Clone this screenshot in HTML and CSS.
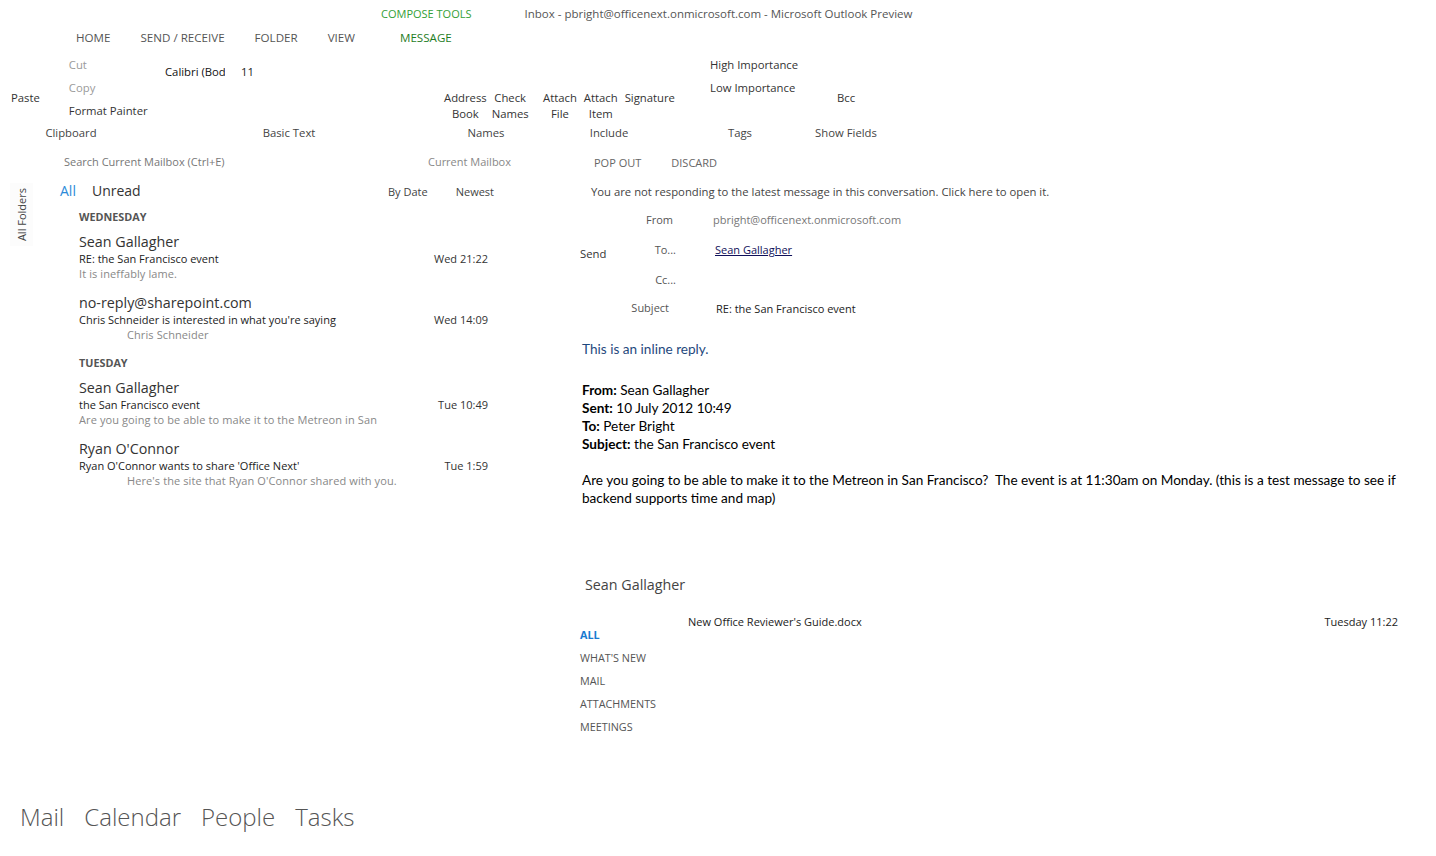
FILE: index.html
```html
<!DOCTYPE html>
<html lang="en">
<head>
    <meta charset="UTF-8">
    <meta name="viewport" content="width=device-width, initial-scale=1.0">
    <title>Inbox - pbright@officenext.onmicrosoft.com - Microsoft Outlook Preview</title>
    <link rel="stylesheet" href="styles.css">
</head>
<body>
<div class="app">
    <!-- Title bar -->
    <div class="titlebar">
        <span class="context-tab">COMPOSE TOOLS</span>
        <span class="window-title">Inbox - pbright@officenext.onmicrosoft.com - Microsoft Outlook Preview</span>
    </div>

    <!-- Ribbon tabs -->
    <div class="tabs">
        <span class="tab">HOME</span>
        <span class="tab">SEND / RECEIVE</span>
        <span class="tab">FOLDER</span>
        <span class="tab">VIEW</span>
        <span class="tab tab-message">MESSAGE</span>
    </div>

    <!-- Ribbon -->
    <div class="ribbon">
        <div class="group group-clipboard">
            <div class="group-body">
                <div class="big-btn">Paste</div>
                <div class="small-col">
                    <div class="small-btn disabled">Cut</div>
                    <div class="small-btn disabled">Copy</div>
                    <div class="small-btn">Format Painter</div>
                </div>
            </div>
            <div class="group-label">Clipboard</div>
        </div>
        <div class="group group-text">
            <div class="group-body">
                <div class="font-box">Calibri (Bod</div>
                <div class="size-box">11</div>
            </div>
            <div class="group-label">Basic Text</div>
        </div>
        <div class="group group-names">
            <div class="group-body">
                <div class="big-btn">Address<br>Book</div>
                <div class="big-btn">Check<br>Names</div>
            </div>
            <div class="group-label">Names</div>
        </div>
        <div class="group group-include">
            <div class="group-body">
                <div class="big-btn">Attach<br>File</div>
                <div class="big-btn">Attach<br>Item</div>
                <div class="big-btn">Signature</div>
            </div>
            <div class="group-label">Include</div>
        </div>
        <div class="group group-tags">
            <div class="group-body">
                <div class="small-col">
                    <div class="small-btn">High Importance</div>
                    <div class="small-btn">Low Importance</div>
                </div>
            </div>
            <div class="group-label">Tags</div>
        </div>
        <div class="group group-fields">
            <div class="group-body">
                <div class="big-btn">Bcc</div>
            </div>
            <div class="group-label">Show Fields</div>
        </div>
    </div>

    <div class="main">
        <div class="search-row">
            <span class="search">Search Current Mailbox (Ctrl+E)</span>
            <span class="scope">Current Mailbox</span>
        </div>
        <div class="pane-toolbar">
            <span>POP OUT</span>
            <span>DISCARD</span>
        </div>

        <div class="rail"><span class="rail-label">All Folders</span></div>

        <!-- Message list -->
        <div class="message-list">
            <div class="list-head">
                <span class="filter active">All</span>
                <span class="filter">Unread</span>
                <span class="sort sort-first">By Date</span>
                <span class="sort">Newest</span>
            </div>

            <div class="day">WEDNESDAY</div>
            <div class="msg">
                <div class="sender">Sean Gallagher</div>
                <div class="msg-line"><span>RE: the San Francisco event</span><span class="time">Wed 21:22</span></div>
                <div class="preview">It is ineffably lame.</div>
            </div>
            <div class="msg">
                <div class="sender">no-reply@sharepoint.com</div>
                <div class="msg-line"><span>Chris Schneider is interested in what you're saying</span><span class="time">Wed 14:09</span></div>
                <div class="preview indent">Chris Schneider</div>
            </div>

            <div class="day">TUESDAY</div>
            <div class="msg">
                <div class="sender">Sean Gallagher</div>
                <div class="msg-line"><span>the San Francisco event</span><span class="time">Tue 10:49</span></div>
                <div class="preview">Are you going to be able to make it to the Metreon in San</div>
            </div>
            <div class="msg">
                <div class="sender">Ryan O'Connor</div>
                <div class="msg-line"><span>Ryan O'Connor wants to share 'Office Next'</span><span class="time">Tue 1:59</span></div>
                <div class="preview indent">Here's the site that Ryan O'Connor shared with you.</div>
            </div>
        </div>

        <!-- Reading pane -->
        <div class="reading-pane">
            <div class="notice">You are not responding to the latest message in this conversation. Click here to open it.</div>

            <div class="compose-head">
                <div class="send-btn">Send</div>
                <div class="field-label from-label">From</div>
                <div class="field-value muted">pbright@officenext.onmicrosoft.com</div>
                <div class="field-label">To...</div>
                <div class="field-value"><span class="recipient">Sean Gallagher</span></div>
                <div class="field-label">Cc...</div>
                <div class="field-value"></div>
                <div class="field-label subject-label">Subject</div>
                <div class="field-value subject-value">RE: the San Francisco event</div>
            </div>

            <div class="mail-body">
                <p class="reply">This is an inline reply.</p>
                <p class="quote-head">
                    <b>From:</b> Sean Gallagher<br>
                    <b>Sent:</b> 10 July 2012 10:49<br>
                    <b>To:</b> Peter Bright<br>
                    <b>Subject:</b> the San Francisco event
                </p>
                <p>Are you going to be able to make it to the Metreon in San Francisco?&nbsp; The event is at 11:30am on Monday. (this is a test message to see if backend supports time and map)</p>
            </div>

            <div class="person-name">Sean Gallagher</div>
            <div class="person-card">
                <div class="person-nav">
                    <div class="active">ALL</div>
                    <div>WHAT'S NEW</div>
                    <div>MAIL</div>
                    <div>ATTACHMENTS</div>
                    <div>MEETINGS</div>
                </div>
                <div class="person-item">
                    <span>New Office Reviewer's Guide.docx</span>
                    <span>Tuesday 11:22</span>
                </div>
            </div>
        </div>
    </div>

    <!-- Bottom navigation -->
    <div class="bottom-nav">
        <span>Mail</span>
        <span>Calendar</span>
        <span>People</span>
        <span>Tasks</span>
    </div>
</div>
</body>
</html>
```

FILE: styles.css
```css
body {
    margin: 0;
    font-family: "Open Sans", "Noto Sans", sans-serif;
    color: #444;
    background: #fff;
}
.app {
    display: flex;
    flex-direction: column;
    height: 100vh;
}

/* title bar + tabs */
.titlebar {
    height: 26px;
    display: flex;
    align-items: center;
    font-size: 11.5px;
}
.context-tab {
    margin-left: 381px;
    font-size: 11px;
    color: #33a036;
}
.window-title {
    margin-left: 53px;
    color: #555;
}
.tabs {
    height: 22px;
    padding-bottom: 2px;
    display: flex;
    align-items: center;
    gap: 30px;
    padding-left: 76px;
    font-size: 11.6px;
    color: #555;
}
.tab-message {
    margin-left: 15px;
    color: #1f7d1f;
}

/* ribbon */
.ribbon {
    display: flex;
    font-size: 11.3px;
    color: #333;
}
.group {
    display: flex;
    flex-direction: column;
}
.group-body {
    height: 74px;
    display: flex;
    align-items: flex-start;
}
.group-label {
    height: 18px;
    line-height: 18px;
    text-align: center;
    color: #444;
}
.big-btn {
    margin-top: 40px;
    line-height: 16px;
    text-align: center;
}
.small-col {
    padding-top: 3px;
}
.small-btn {
    line-height: 23px;
    white-space: nowrap;
}
.small-btn.disabled {
    color: #9a9a9a;
}
.group-clipboard {
    width: 142px;
}
.group-clipboard .group-body {
    padding-left: 11px;
    gap: 29px;
}
.group-text {
    width: 294px;
}
.group-text .group-body {
    padding-left: 23px;
}
.font-box {
    width: 60px;
    margin-top: 14px;
    line-height: 16px;
    overflow: hidden;
    white-space: nowrap;
    color: #111;
}
.size-box {
    margin-top: 14px;
    margin-left: 16px;
    line-height: 16px;
    color: #222;
}
.group-names {
    width: 100px;
}
.group-names .group-body {
    padding-left: 8px;
    gap: 5px;
}
.group-include {
    width: 146px;
}
.group-include .group-body {
    padding-left: 7px;
    gap: 7px;
}
.group-tags {
    width: 116px;
}
.group-tags .group-body {
    padding-left: 28px;
}
.group-fields {
    width: 96px;
}
.group-fields .group-body {
    justify-content: center;
}

/* main area */
.main {
    flex: 1;
    display: grid;
    grid-template-columns: 40px 480px 1fr;
    grid-template-rows: 38px 1fr;
}
.search-row {
    grid-column: 2;
    display: flex;
    align-items: center;
    justify-content: space-between;
    padding: 0 9px 0 24px;
    font-size: 11px;
    color: #777;
}
.scope {
    color: #888;
}
.pane-toolbar {
    grid-column: 3;
    display: flex;
    align-items: center;
    gap: 30px;
    padding-left: 74px;
    padding-top: 2px;
    font-size: 11px;
    color: #666;
}
.rail {
    grid-column: 1;
    grid-row: 2;
    padding-left: 10px;
}
.rail-label {
    display: inline-block;
    margin-top: 3px;
    padding: 5px 4px;
    writing-mode: vertical-rl;
    transform: rotate(180deg);
    font-size: 11px;
    color: #444;
    background: #fcfcfc;
}

/* message list */
.message-list {
    grid-column: 2;
    grid-row: 2;
}
.list-head {
    display: flex;
    align-items: baseline;
    padding: 0 26px 0 20px;
    line-height: 21px;
}
.filter {
    font-size: 14px;
    color: #333;
    margin-right: 16px;
}
.filter.active {
    color: #2b8ad8;
}
.sort {
    font-size: 11px;
    color: #444;
    margin-left: 28px;
}
.sort-first {
    margin-left: auto;
}
.day {
    margin-top: 6px;
    padding-left: 39px;
    line-height: 18px;
    font-size: 10.8px;
    font-weight: bold;
    color: #555;
}
.msg {
    padding: 0 32px 0 39px;
    margin-top: 6px;
    margin-bottom: 12px;
}
.msg + .msg {
    margin-top: 0;
}
.sender {
    font-size: 14.3px;
    line-height: 19px;
    color: #333;
}
.msg-line {
    display: flex;
    justify-content: space-between;
    font-size: 11px;
    line-height: 15px;
    color: #222;
}
.time {
    color: #333;
}
.preview {
    font-size: 11px;
    line-height: 15px;
    letter-spacing: 0.1px;
    color: #888;
}
.preview.indent {
    padding-left: 48px;
}

/* reading pane */
.reading-pane {
    grid-column: 3;
    grid-row: 2;
    padding: 0 38px 0 60px;
}
.notice {
    margin-top: 3px;
    padding-left: 11px;
    line-height: 18px;
    font-size: 11.3px;
    color: #444;
}
.compose-head {
    margin-top: 3px;
    display: grid;
    grid-template-columns: 46px 50px 1fr;
    grid-auto-rows: 30px;
    align-items: center;
    font-size: 11px;
}
.send-btn {
    grid-column: 1;
    grid-row: 1 / 4;
    align-self: start;
    margin-top: 42px;
    font-size: 11.3px;
    color: #333;
}
.field-label {
    grid-column: 2;
    text-align: right;
    color: #555;
}
.from-label {
    padding-right: 3px;
}
.subject-label {
    padding-right: 7px;
    margin-top: -3px;
}
.field-value {
    grid-column: 3;
    padding-left: 37px;
    color: #222;
}
.field-value.muted {
    color: #777;
}
.recipient {
    padding-left: 2px;
    color: #10105a;
    text-decoration: underline;
}
.subject-value {
    padding-left: 40px;
    margin-top: -1px;
}
.mail-body {
    margin-top: 16px;
    padding-left: 2px;
    font-family: "Lato", "Liberation Sans", sans-serif;
    font-size: 13.6px;
    line-height: 18px;
    color: #000;
}
.mail-body p {
    margin: 0 0 18px;
}
.mail-body .reply {
    margin-bottom: 23px;
    color: #1f497d;
}
.person-name {
    margin-top: 67px;
    padding-left: 5px;
    font-size: 14.3px;
    line-height: 22px;
    color: #444;
}
.person-card {
    margin-top: 17px;
    display: flex;
}
.person-nav {
    width: 108px;
    padding-top: 10px;
    font-size: 10.8px;
    line-height: 23px;
    color: #555;
}
.person-nav .active {
    font-weight: bold;
    color: #1a7ad0;
}
.person-item {
    flex: 1;
    display: flex;
    justify-content: space-between;
    align-self: flex-start;
    line-height: 18px;
    font-size: 11px;
    color: #222;
}

/* bottom nav */
.bottom-nav {
    display: flex;
    gap: 20px;
    padding: 0 0 21px 20px;
    line-height: 36px;
    font-size: 24px;
    font-weight: 300;
    color: #555;
}
```
